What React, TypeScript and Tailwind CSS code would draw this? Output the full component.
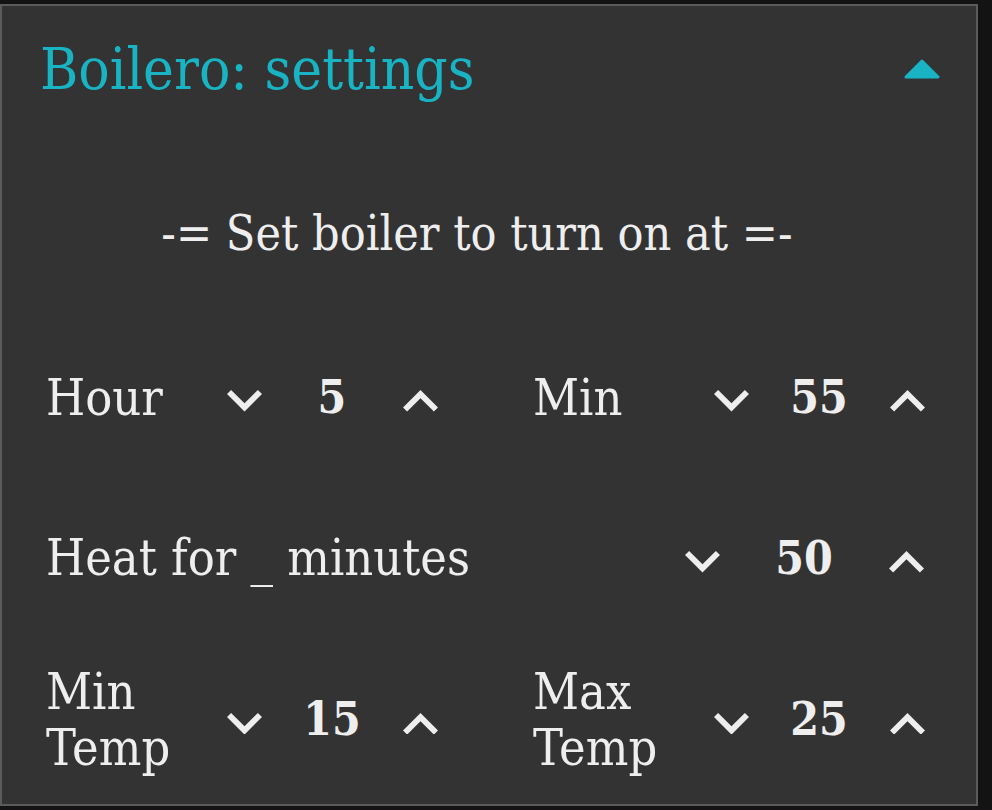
import React from "react";

const FONT = { fontFamily: '"DejaVu Serif Condensed", "DejaVu Serif", serif', fontStretch: "condensed" as const };

function Down() {
  return (
    <svg viewBox="6 8.59 12 7.41" width="35" height="21.6" fill="#eeeeee">
      <path d="M16.59 8.59L12 13.17 7.41 8.59 6 10l6 6 6-6z" />
    </svg>
  );
}

function Up() {
  return (
    <svg viewBox="6 8 12 7.41" width="35" height="21.6" fill="#eeeeee">
      <path d="M12 8l-6 6 1.41 1.41L12 10.83l4.59 4.58L18 14z" />
    </svg>
  );
}

function Btn({ children }: { children: React.ReactNode }) {
  return <div className="w-[60px] flex items-center justify-center">{children}</div>;
}

function Control({ label, value }: { label: React.ReactNode; value: string }) {
  return (
    <div className="flex items-center pl-[44px]">
      <div className="w-[168px] text-[50px] leading-[56px] pb-[6px]">{label}</div>
      <Btn>
        <Down />
      </Btn>
      <div className="w-[116px] text-center text-[46px] font-bold leading-[56px] pb-[8px]">{value}</div>
      <Btn>
        <Up />
      </Btn>
    </div>
  );
}

export default function App() {
  return (
    <div className="w-[992px] h-[810px] bg-[#131313] pt-[4px]" style={FONT}>
      <div className="w-[978px] h-[802px] border-2 border-[#5b5b5b] bg-[#333333] text-[#eeeeee] flex flex-col">
        <div className="h-[126px] flex items-center justify-between pl-[38px] pr-[36px]">
          <div className="text-[58px] leading-[70px] text-[#19b4c4]">Boilero: settings</div>
          <svg width="36" height="20" viewBox="0 0 36 20">
            <polygon points="2,18 18,2 34,18" fill="#19b4c4" stroke="#19b4c4" strokeWidth="3" strokeLinejoin="round" />
          </svg>
        </div>
        <div className="h-[190px] flex items-center justify-center pt-[14px] pr-[24px]">
          <div className="text-[48px] leading-[56px]">-= Set boiler to turn on at =-</div>
        </div>
        <div className="h-[162px] grid grid-cols-2 items-center">
          <Control label="Hour" value="5" />
          <Control label="Min" value="55" />
        </div>
        <div className="h-[162px] flex items-center pl-[44px] pr-[40px]">
          <div className="flex-1 text-[50px] leading-[56px] pb-[8px]">Heat for _ minutes</div>
          <Btn>
            <Down />
          </Btn>
          <div className="w-[144px] text-center text-[46px] font-bold leading-[56px] pb-[8px]">50</div>
          <Btn>
            <Up />
          </Btn>
        </div>
        <div className="h-[162px] grid grid-cols-2 items-center">
          <Control label="Min Temp" value="15" />
          <Control label="Max Temp" value="25" />
        </div>
      </div>
    </div>
  );
}
